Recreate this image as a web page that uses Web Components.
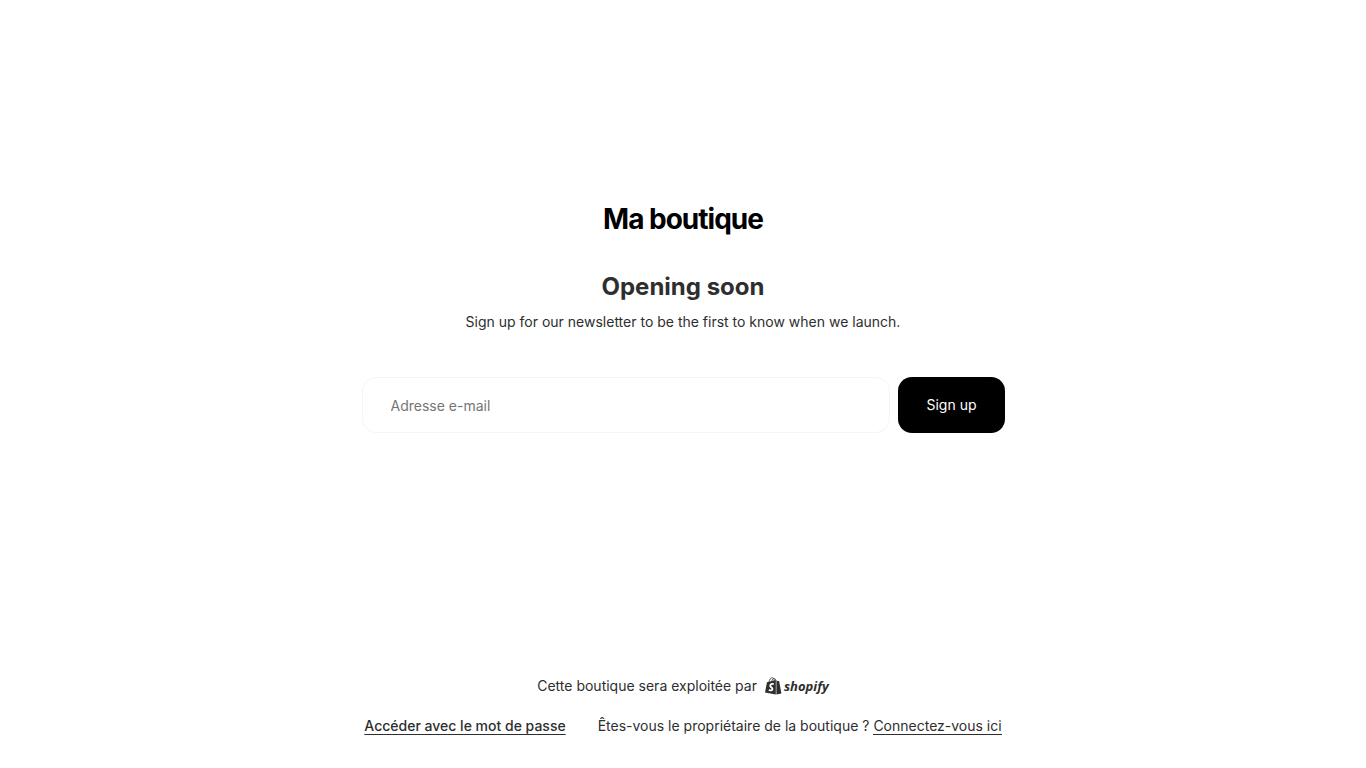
<!DOCTYPE html>
<html lang="fr">
<head>
<meta charset="utf-8">
<meta name="viewport" content="width=device-width, initial-scale=1">
<title>Ma boutique</title>
<style>
body { margin: 0; background: #fff; color: #2e2e2e; font-family: Inter, "Liberation Sans", sans-serif; font-size: 14px; line-height: 20px; }
</style>
</head>
<body>
<store-page>
  <store-intro>
    <span slot="name">Ma boutique</span>
    <span slot="heading">Opening soon</span>
    <span slot="text">Sign up for our newsletter to be the first to know when we launch.</span>
  </store-intro>
  <newsletter-form></newsletter-form>
  <store-footer slot="footer"></store-footer>
</store-page>
<script>
function define(name, html) {
  const template = document.createElement('template');
  template.innerHTML = html;
  customElements.define(name, class extends HTMLElement {
    constructor() {
      super();
      this.attachShadow({ mode: 'open' }).append(template.content.cloneNode(true));
    }
  });
}

define('store-page', `
<style>
:host { display: flex; flex-direction: column; min-height: 100vh; box-sizing: border-box; padding: 0 16px 32px; }
main { flex: 1; display: flex; flex-direction: column; align-items: center; justify-content: center; gap: 45px; padding-bottom: 42px; }
</style>
<main><slot></slot></main>
<slot name="footer"></slot>`);

define('store-intro', `
<style>
:host { display: flex; flex-direction: column; align-items: center; text-align: center; }
h1, h2, p { margin: 0; }
h1 { color: #000; font-size: 28px; line-height: 36px; font-weight: 700; letter-spacing: -1px; }
h2 { margin-top: 32px; font-size: 24px; line-height: 36px; font-weight: 700; }
p { margin-top: 7px; }
</style>
<h1><slot name="name"></slot></h1>
<h2><slot name="heading"></slot></h2>
<p><slot name="text"></slot></p>`);

define('newsletter-form', `
<style>
:host { display: block; width: 100%; max-width: 643px; }
form { display: flex; gap: 8px; }
input, button { box-sizing: border-box; height: 56px; padding: 0 28px; border-radius: 14px; font: inherit; }
input { flex: 1; min-width: 0; border: 1px solid #f5f5f5; background: #fff; color: #2e2e2e; }
input::placeholder { color: #757575; opacity: 1; }
button { border: 0; background: #000; color: #fff; }
</style>
<form>
  <input type="email" aria-label="Adresse e-mail" placeholder="Adresse e-mail">
  <button type="button">Sign up</button>
</form>`);

define('shopify-logo', `
<style>
:host { display: inline-flex; }
a { display: flex; align-items: center; gap: 2px; color: #2e2e2e; text-decoration: none; font: italic 700 13px/20px "Open Sans", sans-serif; }
svg { display: block; }
</style>
<a href="#" aria-label="shopify">
  <svg width="17" height="18" viewBox="0 0 17 18" aria-hidden="true">
    <path fill="#2e2e2e" d="M2 5.2 10.8 2.9V17.6L0 15.6Z"/>
    <path fill="#2e2e2e" d="M11.4 3 12.3 3.9 14.1 4.1 16.4 16.5 11.4 17.6Z"/>
    <path fill="none" stroke="#2e2e2e" stroke-width=".8" d="M4 5C4.4 2.6 5.8.7 7.3.7 8.6.7 9.3 2.1 9.4 4M6.7 4.5C7 2.5 8.2 1.3 9.3 1.5 10.2 1.7 10.6 2.4 10.8 3.4"/>
    <path fill="none" stroke="#fff" stroke-width="1.8" d="M8.8 7.2C7.2 6.5 5.2 7.2 5.2 8.7 5.2 10.2 7.5 10.3 7.5 12.1 7.5 13.8 5.3 13.8 3.9 12.7"/>
  </svg>
  <span>shopify</span>
</a>`);

define('store-footer', `
<style>
:host { display: flex; flex-direction: column; align-items: center; gap: 20px; }
div { display: flex; flex-wrap: wrap; justify-content: center; align-items: center; }
.powered { gap: 8px; }
.links { column-gap: 32px; row-gap: 12px; }
button { border: 0; padding: 0; background: none; color: inherit; font: inherit; font-weight: 500; text-decoration: underline; text-underline-offset: 3px; cursor: pointer; }
.owner a { color: inherit; text-decoration: none; border-bottom: 1px solid; }
</style>
<div class="powered"><span>Cette boutique sera exploitée par</span><shopify-logo></shopify-logo></div>
<div class="links">
  <button type="button">Accéder avec le mot de passe</button>
  <span class="owner">Êtes-vous le propriétaire de la boutique ? <a href="#">Connectez-vous ici</a></span>
</div>`);
</script>
</body>
</html>
